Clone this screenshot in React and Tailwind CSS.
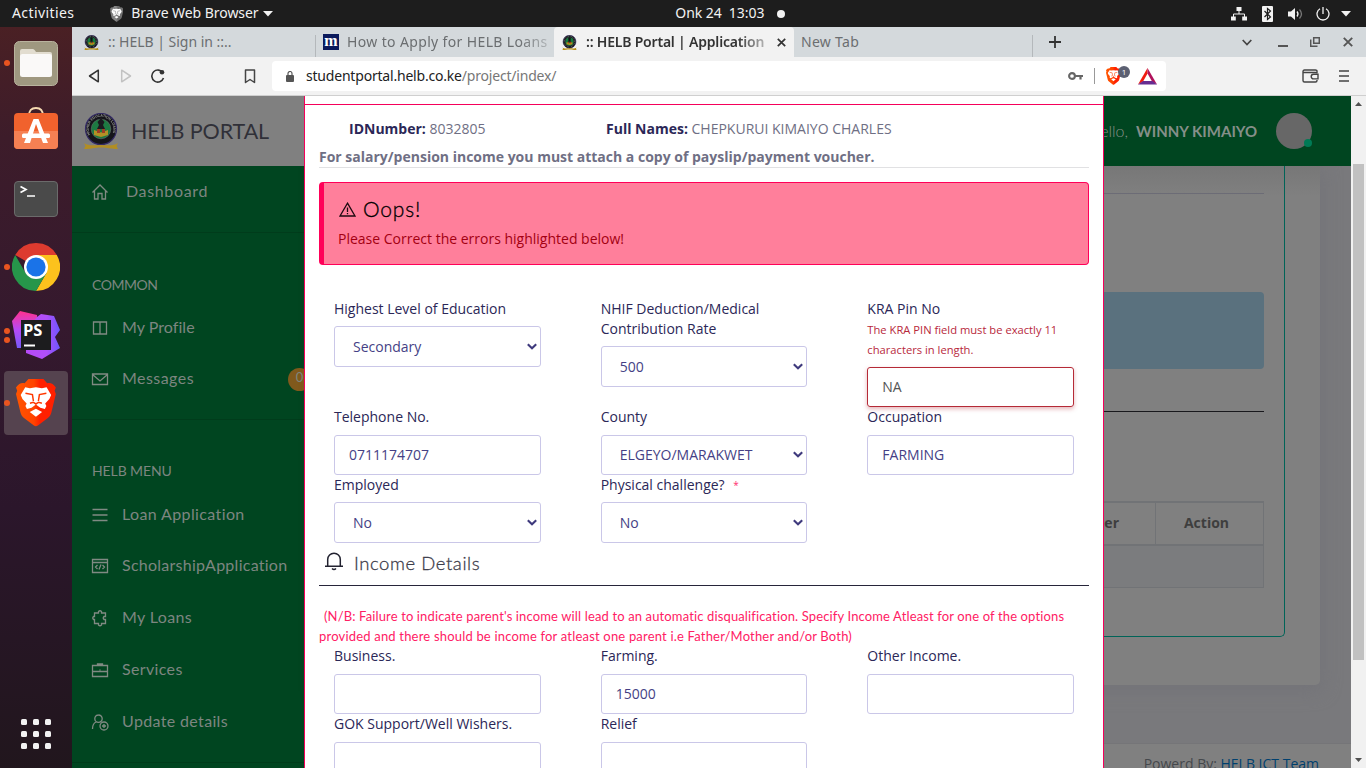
import React from "react";

const Caret = ({ className = "" }) => (
  <svg className={className} width="10" height="6" viewBox="0 0 10 6"><path d="M0 0h10L5 5.5z" fill="#f2f2f2" /></svg>
);

const LionFace = ({ line }) => (
  <g>
    <path
      fill="#fff"
      d="M4.700 16L9.300 8.300l4.700.8 6-.8 6 .8 4.700-.8L35.300 16 33.500 20l-4.200 4.500 1.200 2.500-1.500 3-4.600-1.200L20 25.600l-4.400 3.200L11 30l-1.500-3 1.200-2.500L6.500 20zM13.800 33l6.200-3.200 6.200 3.200L20 37.800z"
    />
    <path d="M9.500 14.200l7 1.300 1 6.500M30.500 14.200l-7 1.300-1 6.500M14 24.200l3.300-1 2.700 1.800 2.700-1.800 3.300 1" fill="none" stroke={line} strokeWidth="1.500" />
  </g>
);

const BraveLogo = ({ size = 48, mono = false, id }) => (
  <svg width={size * 0.83} height={size} viewBox="0 0 40 48">
    <defs>
      <linearGradient id={id} x1="0" x2="1">
        <stop offset="0" stopColor={mono ? "#777" : "#ff5500"} />
        <stop offset=".45" stopColor={mono ? "#888" : "#ff4400"} />
        <stop offset=".6" stopColor={mono ? "#666" : "#ff2000"} />
        <stop offset="1" stopColor={mono ? "#777" : "#ff2000"} />
      </linearGradient>
    </defs>
    <path fill={`url(#${id})`} d="M12.500 0h15l3.800 4.200c3.500-.8 6 .6 8.700 4.200l-1.200 3.300 1.200 3.300-4.500 18.500c-.6 2.300-1.500 4-3.500 5.500L22 46.500c-1.400 1-2.600 1-4 0L8 39c-2-1.500-2.900-3.200-3.500-5.500L0 15l1.200-3.300L0 8.400C2.700 4.800 5.200 3.400 8.700 4.200z" />
    <LionFace line={mono ? "#777" : "#ff3800"} />
  </svg>
);

const Crest = ({ w, h, large = false, id }) => (
  <svg width={w} height={h} viewBox="0 0 34 36" opacity={large ? 0.9 : 1}>
    <circle cx="17" cy="16" r="15.500" fill="#0a0a10" stroke="#2c2263" strokeWidth="1.200" />
    {large ? (
      <>
        <defs><path id={id} d="M7 23a12.200 12.200 0 1 1 20 0" /></defs>
        <text fontSize="3.600" fill="#9a9a9a" fontFamily="Liberation Sans, sans-serif" fontWeight="bold">
          <textPath href={`#${id}`} textLength="48" startOffset="1.500">HIGHER EDUCATION LOANS</textPath>
        </text>
      </>
    ) : (
      <circle cx="17" cy="16" r="12.800" fill="none" stroke="#777" strokeWidth="2.500" strokeDasharray="1.500 2" />
    )}
    <circle cx="17" cy="16" r="9.800" fill="#137a3c" stroke="#777" strokeWidth=".5" />
    <path d="M17 5l3.500 4-1.500 3 2 4h-8l2-4-1.500-3z" fill="#101015" />
    <path d="M10 17l7 2.500 7-2.500v5l-7 2-7-2z" fill="#b9921c" />
    <path d="M13 16h3v4h-3zM18 16h3v4h-3z" fill="#a3361d" />
    <path d="M0 30c5 3.500 10 2 17 2s12 1.500 17-2l-1.500 3 1.500 3c-5 .5-8-1.500-17-1.500S5 36.500 0 36l1.500-3z" fill="#b8901a" />
  </svg>
);

function TopBar() {
  return (
    <div className="flex h-[27px] shrink-0 items-center bg-[#1d1d1d] font-['Noto_Sans',sans-serif] text-[14px] text-[#f2f2f2]">
      <div className="w-[110px] pb-[2px] pl-3 tracking-[0.4px]">Activities</div>
      <BraveLogo size={16} mono id="bm" />
      <div className="ml-[8px] w-[132px] pb-[2px] whitespace-nowrap tracking-[-0.05px]">Brave Web Browser</div>
      <Caret />
      <div className="ml-[402px] flex items-center whitespace-pre">
        <span className="w-[102px] pb-[2px] tracking-[-0.05px]">Onk 24  13:03</span>
        <span className="size-2 rounded-full bg-[#f2f2f2]" />
      </div>
      <div className="ml-auto flex items-center pr-[15px]">
        <svg width="16" height="14" viewBox="0 0 16 14" fill="#f2f2f2">
          <path d="M5.500 0h5v4h-5zM0 9.500h4.800V13.500H0zM11.200 9.500H16V13.500h-4.800z" />
          <path d="M8 4v3M2.500 10V7h11v3" fill="none" stroke="#f2f2f2" />
        </svg>
        <svg className="ml-[15px]" width="11" height="16" viewBox="0 0 11 16">
          <rect width="11" height="16" rx="1" fill="#f2f2f2" />
          <path d="M2.500 5l6 6-3 2.500v-11L8.500 5l-6 6" fill="none" stroke="#1d1d1d" strokeWidth="1.200" />
        </svg>
        <svg className="ml-[15px]" width="15" height="14" viewBox="0 0 15 14" fill="#f2f2f2">
          <path d="M0 4.500h3L7 1v12L3 9.500H0z" />
          <path d="M9 4.500q2 2.500 0 5" fill="none" stroke="#f2f2f2" strokeWidth="1.300" />
          <path d="M11.500 2.500q4 4.500 0 9" fill="none" stroke="#777" strokeWidth="1.300" />
        </svg>
        <svg className="ml-[13px]" width="14" height="14" viewBox="0 0 14 14" fill="none" stroke="#f2f2f2" strokeWidth="1.300">
          <path d="M7 0v7M4 1.800a6 6 0 1 0 6 0" />
        </svg>
        <Caret className="ml-[11px]" />
      </div>
    </div>
  );
}

const DockRow = ({ dots = 0, children }) => (
  <div className="relative flex h-[68px] w-[72px] items-center justify-center">
    <div className="absolute left-1 flex flex-col gap-[3px]">
      {Array.from({ length: dots }, (_, i) => <span key={i} className="size-[6px] rounded-full bg-[#e95420]" />)}
    </div>
    {children}
  </div>
);

function Dock() {
  return (
    <div className="flex w-[72px] shrink-0 flex-col bg-[linear-gradient(#4a2024,#3d1c2a_15%,#35192e_40%,#2b162b_65%,#21161d)] pt-[2px]">
      <DockRow dots={1}>
        <svg width="44" height="45" viewBox="0 0 44 45">
          <rect x=".5" y=".5" width="43" height="44" rx="5" fill="#9f9880" stroke="#b9b39e" />
          <path d="M6 10q0-2 2-2h11q1 0 2 1.500l1 1.500h14q2 0 2 2v20H6z" fill="#e2ddd0" />
          <rect x="6" y="13" width="32" height="23" rx="2.500" fill="#faf9f8" />
        </svg>
      </DockRow>
      <DockRow>
        <svg className="mb-[6px]" width="44" height="44" viewBox="0 0 44 44">
          <path d="M15 10q0-8 7-8t7 8" fill="none" stroke="#f5d9b0" strokeWidth="1.800" />
          <rect y="7" width="44" height="36" rx="4" fill="#f1622d" />
          <path d="M0 25h44v14q0 4-4 4H4q-4 0-4-4z" fill="#f58053" />
          <path d="M19.500 13h5L34 37h-5l-7-19-6 19h-6z" fill="#fff" />
          <rect x="8" y="27.500" width="28" height="4.500" rx="1.500" fill="#fff" />
        </svg>
      </DockRow>
      <DockRow>
        <svg width="44" height="36" viewBox="0 0 44 36">
          <rect x=".5" y=".5" width="43" height="35" rx="3.500" fill="#4a4a4a" stroke="#6b6b6b" />
          <path d="M6.500 5.500l5.500 3-5.500 3M13 15h8" fill="none" stroke="#fff" strokeWidth="1.700" />
        </svg>
      </DockRow>
      <DockRow dots={1}>
        <svg width="48" height="48" viewBox="0 0 48 48">
          <path d="M24 24L3.215 12A24 24 0 0 1 44.785 12z" fill="#dd3b2f" />
          <path d="M24 24V12h20.785A24 24 0 0 1 24 48l10.400-18z" fill="#fcc21d" />
          <path d="M13.600 30L3.215 12A24 24 0 0 0 24 48l10.400-18z" fill="#26964a" />
          <circle cx="24" cy="24" r="12" fill="#fff" />
          <circle cx="24" cy="24" r="9.600" fill="#1a73e8" />
        </svg>
      </DockRow>
      <DockRow dots={2}>
        <svg width="48" height="48" viewBox="0 0 48 48">
          <defs>
            <linearGradient id="psa" x1="0" y1="0" x2="0" y2="1"><stop offset="0" stopColor="#ff318c" /><stop offset=".5" stopColor="#b74af7" /><stop offset="1" stopColor="#765af8" /></linearGradient>
            <linearGradient id="psb" x1="0" x2="1"><stop offset="0" stopColor="#b74af7" /><stop offset=".6" stopColor="#b04ff7" /><stop offset="1" stopColor="#6b57ff" /></linearGradient>
          </defs>
          <path d="M0 10L8 0l17 4 2 33H5z" fill="url(#psa)" />
          <path d="M25 6l4-3 13 2 6 14-5 7 5 11-18 11-16-6V20z" fill="url(#psb)" />
          <rect x="9" y="9" width="30" height="30" fill="#1c1c1e" />
          <path d="M12 34.500h11" stroke="#fff" strokeWidth="2" />
          <text x="11" y="25" fontSize="16.500" fontWeight="bold" fill="#fff" fontFamily="Open Sans, sans-serif">PS</text>
        </svg>
      </DockRow>
      <DockRow dots={1}>
        <div className="flex size-16 items-center justify-center rounded-[4px] bg-[#55434f]"><BraveLogo id="bd" /></div>
      </DockRow>
      <div className="mt-auto mb-[19px] grid grid-cols-3 gap-[6px] self-center">
        {Array.from({ length: 9 }, (_, i) => <span key={i} className="size-[6px] rounded-[1.5px] bg-[#f2f2f2]" />)}
      </div>
    </div>
  );
}

function Tabs() {
  return (
    <div className="flex h-[30px] shrink-0 items-center bg-[#d4d9dc] font-['Noto_Sans',sans-serif] text-[14px] whitespace-nowrap text-[#6b6e70]">
      <div className="flex w-[244px] items-center pl-[12px]">
        <Crest w={15} h={15} />
        <span className="ml-[9px] grow pb-[2px] tracking-[-0.02px]">:: HELB | Sign in ::..</span>
        <span className="h-[22px] w-px translate-y-1 bg-[#b4b8bb]" />
      </div>
      <div className="flex w-[238px] items-center pl-[7px]">
        <span className="flex size-4 items-center justify-center bg-[#0b1a5c] pb-[3px] font-['Liberation_Serif',serif] text-[16px] leading-4 font-bold text-white">m</span>
        <span className="ml-[8px] w-[202px] overflow-hidden pb-[2px] tracking-[0.36px] [mask-image:linear-gradient(90deg,#000_85%,rgba(0,0,0,0.3))]">How to Apply for HELB Loans</span>
      </div>
      <div className="flex h-full w-[240px] items-center rounded-t-[4px] bg-[#f2f2f2] pl-[8px] text-[#333]">
        <Crest w={15} h={15} />
        <span className="ml-[9px] w-[184px] overflow-hidden pb-[2px] font-semibold tracking-[-0.2px] [mask-image:linear-gradient(90deg,#000_82%,rgba(0,0,0,0.2))]">:: HELB Portal | Application</span>
        <svg className="ml-[7px]" width="9" height="9" viewBox="0 0 9 9"><path d="M.8.8l7.400 7.400M8.200.8L.8 8.200" stroke="#333" strokeWidth="1.700" /></svg>
      </div>
      <div className="flex w-[239px] items-center pl-[7px]">
        <span className="grow pb-[2px] tracking-[0.3px]">New Tab</span>
        <span className="h-[22px] w-px translate-y-1 bg-[#b4b8bb]" />
      </div>
      <svg className="ml-[16px]" width="12" height="12" viewBox="0 0 12 12"><path d="M6 0v12M0 6h12" stroke="#333" strokeWidth="1.800" /></svg>
      <div className="ml-auto flex items-center pr-[13px]">
        <svg width="10" height="7" viewBox="0 0 10 7"><path d="M.7 1L5 5.500 9.300 1" fill="none" stroke="#444" strokeWidth="1.700" /></svg>
        <svg className="mt-[2px] ml-[26px]" width="10" height="10" viewBox="0 0 10 10"><path d="M0 8h10" stroke="#555" strokeWidth="2" /></svg>
        <svg className="ml-[22px]" width="10" height="10" viewBox="0 0 10 10"><path d="M3.700.7h5.600v5.600H3.700zM.7 2.500v6.800h6.800" fill="none" stroke="#555" strokeWidth="1.500" /></svg>
        <svg className="ml-[23px]" width="10" height="10" viewBox="0 0 10 10"><path d="M.8.8l8.400 8.400M9.200.8L.8 9.200" stroke="#555" strokeWidth="1.900" /></svg>
      </div>
    </div>
  );
}

function Toolbar() {
  return (
    <div className="flex h-[39px] shrink-0 items-center border-b border-[#cfcfcf] bg-[#f2f2f2] pl-[16px] font-['Noto_Sans',sans-serif] text-[14px]">
      <svg width="12" height="14" viewBox="0 0 12 14"><path d="M10.300 1.200v11.600L1.500 7z" fill="none" stroke="#333" strokeWidth="1.500" strokeLinejoin="round" /></svg>
      <svg className="ml-[20px]" width="12" height="14" viewBox="0 0 12 14"><path d="M1.700 1.200v11.600L10.500 7z" fill="none" stroke="#c2c2c2" strokeWidth="1.500" strokeLinejoin="round" /></svg>
      <svg className="ml-[18px]" width="15" height="14" viewBox="0 0 15 14"><path d="M13.500 9a6 6 0 1 1-.5-5" fill="none" stroke="#333" strokeWidth="1.600" /><circle cx="12" cy="3.200" r="2.300" fill="#333" /></svg>
      <svg className="ml-[79px]" width="12" height="15" viewBox="0 0 12 15"><path d="M1.500 1h9v12.500L6 10.500l-4.500 3z" fill="none" stroke="#444" strokeWidth="1.500" strokeLinejoin="round" /></svg>
      <div className="ml-[16px] flex h-[30px] w-[894px] items-center rounded-[4px] bg-white pl-[14px]">
        <svg width="8" height="11" viewBox="0 0 8 11"><rect y="4" width="8" height="7" rx="1" fill="#555" /><path d="M2 4V2.500a2 2 0 0 1 4 0V4" fill="none" stroke="#555" strokeWidth="1.200" /></svg>
        <span className="ml-[12px] pb-[2px] tracking-[-0.2px] text-[#222]">studentportal.helb.co.ke<span className="text-[#777]">/project/index/</span></span>
        <svg className="ml-auto" width="15" height="8" viewBox="0 0 15 8"><circle cx="4" cy="4" r="2.900" fill="none" stroke="#666" strokeWidth="2.100" /><path d="M7 4h8M12.500 4v3.500" stroke="#666" strokeWidth="2.200" /></svg>
        <span className="ml-[11px] h-4 w-px bg-[#999]" />
        <span className="relative ml-[11px] flex w-[25px]">
          <BraveLogo size={18} id="bt" />
          <span className="absolute -top-[1px] left-[12px] flex h-[12px] w-[12px] items-center justify-center rounded-full bg-[#5c6072] font-['Open_Sans',sans-serif] text-[8px] text-white">1</span>
        </span>
        <svg className="mr-[9px] ml-[7px]" width="19" height="17" viewBox="0 0 19 17">
          <path d="M9.500 0L0 16.500l5-3 4.500-8z" fill="#f01c10" />
          <path d="M9.500 0L19 16.500l-5-3-4.500-8z" fill="#b0125c" />
          <path d="M0 16.500h19l-4.500-3.500H5z" fill="#662d91" />
        </svg>
      </div>
      <svg className="ml-auto" width="17" height="14" viewBox="0 0 17 14" fill="none" stroke="#444" strokeWidth="1.400">
        <path d="M15 4V2.200Q15 1 13.500 1h-11Q1 1 1 2.500v9Q1 13 2.500 13h11q1.500 0 1.500-1.500V11M1 3.500h12.500q1.500 0 1.500 1" />
        <path d="M16 5.300h-4.500a2.300 2.300 0 0 0 0 4.600H16z" />
      </svg>
      <svg className="mr-[17px] ml-[20px]" width="10" height="12" viewBox="0 0 10 12"><path d="M0 1h10M0 6h10M0 11h10" stroke="#444" strokeWidth="1.600" /></svg>
    </div>
  );
}

const icons = {
  home: <path d="M.5 8.500L8 1l7.500 7.500M2.500 7v8h3.500V9.500h4V15h3.500V7" />,
  book: <path d="M1.500 2h13v12h-13zM8 2v12" />,
  mail: <path d="M.5 3h15v10.500H.5zM.5 3.500L8 10l7.500-6.500" />,
  lines: <path d="M.5 2.500h15M.5 8h15M.5 13.500h15" />,
  code: <path d="M.5 1.500h15v13H.5zM.5 4.500h15M5.500 7L3.500 9l2 2M10.500 7l2 2-2 2M9 6.500l-2 5" />,
  gear: <path d="M6.500 1.500q1.500-1.500 3 0v1.500h4v3.500h-1.500q-1.500 1.500 0 3h1.500V13.500h-4V15q-1.500 1.500-3 0v-1.500h-4v-4H1.500Q0 8 1.500 6.500h1V3h4z" />,
  bag: <path d="M.5 3.500h15v11H.5zM.5 9.500h15M5.500 3.500V2h5v1.500M8 7.500v1" />,
  user: <path d="M4.200 8C1.500 9 .5 11.500.5 15M6.500 1a3.700 3.700 0 1 1 0 7.400 3.700 3.700 0 1 1 0-7.400M12 8a4 4 0 1 1 0 8 4 4 0 1 1 0-8M12 10v4M10 12h4" />,
};

const NavItem = ({ icon, label, className }) => (
  <div className={`flex items-center pl-5 ${className}`}>
    <svg className="overflow-visible" width="16" height="16" viewBox="0 0 16 16" fill="none" stroke="#808a83" strokeWidth="1.300">{icons[icon]}</svg>
    {label}
  </div>
);

const navText = "ml-[14px] whitespace-nowrap pb-[2px]";

function Sidebar() {
  return (
    <div className="flex w-[250px] shrink-0 flex-col bg-[#004520] font-['Lato',sans-serif] text-[16px] text-[#7d8680]">
      <NavItem icon="home" className="h-[52px]" label={<span className="ml-[18px] pb-[2px] tracking-[0.65px]">Dashboard</span>} />
      <div className="mt-[14px] h-px bg-[#003c1b]" />
      <div className="mt-[41px] h-[22px] pl-5 text-[14px] leading-[22px] tracking-[-0.45px]">COMMON</div>
      <NavItem icon="book" className="mt-[6px] h-[52px]" label={<span className={`${navText} tracking-[0.05px]`}>My Profile</span>} />
      <div className="flex h-[50px] items-center">
        <NavItem icon="mail" className="" label={<span className={`${navText} tracking-[0.45px]`}>Messages</span>} />
        <span className="ml-[94px] flex size-[23px] shrink-0 items-center justify-center rounded-full bg-[#80591c] pb-[2px] text-[13px]">0</span>
      </div>
      <div className="mt-[15px] h-px bg-[#003c1b]" />
      <div className="mt-[40px] h-[22px] pl-5 text-[14px] leading-[22px] tracking-[-0.1px]">HELB MENU</div>
      <NavItem icon="lines" className="mt-[7px] h-[51px]" label={<span className={`${navText} tracking-[0.38px]`}>Loan Application</span>} />
      <NavItem icon="code" className="h-[52px]" label={<span className={`${navText} tracking-[0.26px]`}>ScholarshipApplication</span>} />
      <NavItem icon="gear" className="h-[52px]" label={<span className={`${navText} tracking-[0.38px]`}>My Loans</span>} />
      <NavItem icon="bag" className="h-[52px]" label={<span className={`${navText} tracking-[0.35px]`}>Services</span>} />
      <NavItem icon="user" className="h-[52px]" label={<span className={`${navText} tracking-[0.35px]`}>Update details</span>} />
      <div className="mt-[14px] h-px bg-[#003c1b]" />
    </div>
  );
}

function Portal() {
  return (
    <div className="flex min-w-0 grow flex-col overflow-hidden font-['Open_Sans',sans-serif] text-[14px]">
      <div className="relative z-10 flex h-[70px] shrink-0 bg-[#004520]">
        <div className="flex w-[250px] items-center bg-[#808080] pl-[12px]">
          <Crest w={34} h={36} large id="crest-ring" />
          <span className="ml-[13px] font-['Lato',sans-serif] text-[21.5px] tracking-[-0.1px] text-[#303038]">HELB PORTAL</span>
        </div>
        <div className="ml-auto flex items-center pr-[39px] font-['Lato',sans-serif] text-[16px] text-[#858f89]">
          <span className="font-light">Hello,</span>
          <span className="ml-[8px] w-[122px] text-[15px] font-bold whitespace-nowrap">WINNY KIMAIYO</span>
          <span className="relative ml-[18px] size-9 rounded-full bg-[#676767]">
            <span className="absolute right-0 bottom-[2px] size-2 rounded-full bg-[#007a55]" />
          </span>
        </div>
      </div>
      <div className="flex min-h-0 grow">
        <Sidebar />
        <div className="flex grow flex-col bg-[#79797c]">
          <div className="mr-[31px] flex h-[519px] flex-col items-end rounded-br-[5px] bg-[linear-gradient(#777_0,#808080_30px)] pr-[35px] shadow-[0_4px_18px_2px_#747479]">
            <div className="flex h-[471px] w-full flex-col rounded-br-[5px] border-r border-b border-[#006458] pr-[20px]">
              <div className="mt-[27px] h-px bg-[#6c6c76]" />
              <div className="mt-[98px] h-[77px] rounded-[4px] bg-[#5a717e]" />
              <div className="mt-[42px] h-px bg-[#18181c]" />
              <div className="mt-[89px] flex h-[45px] border-y-2 border-r border-[#717376] font-bold text-[#3e3e3e]">
                <div className="flex grow items-center justify-end pr-[36px] pb-[2px]">Voucher</div>
                <div className="flex w-[108px] items-center justify-center border-l border-[#717376] pr-[6px] pb-[2px]">Action</div>
              </div>
              <div className="h-[42px] border-r border-b border-[#717376] bg-[#7b7c7e]" />
            </div>
          </div>
          <div className="mt-auto flex h-[25px] justify-end overflow-hidden border-t border-[#757578] bg-[#808080] pt-[9px] pr-[32px] whitespace-pre text-[#45484c]">
            Powerd By: <span className="text-[#00406e]">HELB ICT Team</span>
          </div>
        </div>
      </div>
    </div>
  );
}

const Chevron = () => (
  <svg width="10" height="7" viewBox="0 0 10 7"><path d="M.8 1.200L5 5.200l4.200-4" fill="none" stroke="#3f3a7d" strokeWidth="2.100" /></svg>
);

const Label = ({ children }) => <div className="leading-5 whitespace-nowrap text-[#2b2757]">{children}</div>;

const Select = ({ children, className = "" }) => (
  <div className={`flex h-[41px] items-center justify-between rounded-[3px] border border-[#cac7e8] pr-[3px] pl-[18px] text-[#453f85] ${className}`}>
    {children}<Chevron />
  </div>
);

const Input = ({ children, className = "mt-2 border-[#cac7e8] text-[#453f85]" }) => (
  <div className={`flex h-10 items-center rounded-[3px] border pb-[2px] pl-[14px] ${className}`}>{children}</div>
);

const Row = ({ children, className }) => (
  <div className={`-mx-[15px] grid grid-cols-3 gap-x-[60px] px-[30px] ${className}`}>{children}</div>
);

function Modal() {
  return (
    <div className="absolute top-0 left-[232px] z-20 flex h-full w-[800px] flex-col overflow-hidden border-x border-[#f5005a] bg-white px-[14px] font-['Open_Sans',sans-serif] text-[14px]">
      <div className="-mx-[14px] h-[9px] shrink-0 border-b border-[#f5005a]" />
      <div className="mt-[13px] flex h-5 shrink-0 items-center pl-[30px] whitespace-pre text-[#6f6f84]">
        <div className="w-[257px]"><b className="text-[#2b2757]">IDNumber:</b> 8032805</div>
        <div><b className="text-[#2b2757]">Full Names:</b> CHEPKURUI KIMAIYO CHARLES</div>
      </div>
      <div className="mt-[9px] h-[21px] shrink-0 border-b border-[#e1e1e3] leading-5 font-bold text-[#6f6f84]">For salary/pension income you must attach a copy of payslip/payment voucher.</div>
      <div className="mt-[14px] flex h-[83px] shrink-0 flex-col rounded-[4px] border border-l-[5px] border-[#ff0058] bg-[#ff7f9b] pt-[12px] pl-[14px]">
        <div className="flex h-7 items-center font-['Lato',sans-serif] text-[21px] text-black">
          <svg className="ml-[1px]" width="17" height="15" viewBox="0 0 17 15" fill="none" stroke="#1c0a10" strokeWidth="1.300"><path d="M8.500 1.200L16 14H1zM8.500 5.500v4.500M8.500 11v1.300" /></svg>
          <span className="ml-[7px] font-light tracking-[0.8px] [-webkit-text-stroke:0.3px]">Oops!</span>
        </div>
        <div className="mt-[6px] leading-5 text-[#a30012]">Please Correct the errors highlighted below!</div>
      </div>

      <Row className="mt-[34px] h-[108px] shrink-0">
        <div><Label>Highest Level of Education</Label><Select className="mt-[7px]">Secondary</Select></div>
        <div><Label>NHIF Deduction/Medical<br />Contribution Rate</Label><Select className="mt-[7px]">500</Select></div>
        <div>
          <Label>KRA Pin No</Label>
          <div className="pt-px text-[11.2px] leading-5 whitespace-nowrap text-[#b8283c]">The KRA PIN field must be exactly 11<br />characters in length.</div>
          <Input className="mt-[7px] border-[#b52a37] text-[#555] shadow-[0_2px_4px_rgba(181,42,55,0.35)]">NA</Input>
        </div>
      </Row>
      <Row className="h-[68px] shrink-0">
        <div><Label>Telephone No.</Label><Input>0711174707</Input></div>
        <div><Label>County</Label><Select className="mt-2 h-[40px]! pb-px">ELGEYO/MARAKWET</Select></div>
        <div><Label>Occupation</Label><Input>FARMING</Input></div>
      </Row>
      <Row className="h-[68px] shrink-0">
        <div><Label>Employed</Label><Select className="mt-[7px]">No</Select></div>
        <div><Label>Physical challenge? <span className="ml-[5px] align-[1px] text-[10px] text-[#ff2d6f]">*</span></Label><Select className="mt-[7px]">No</Select></div>
      </Row>
      <div className="flex h-[43px] shrink-0 items-center border-b border-[#27253a] font-['Lato',sans-serif] text-[18.5px] text-[#3c3c4a] pl-[6px]">
        <svg className="mb-[6px]" width="18" height="19" viewBox="0 0 18 19" fill="none" stroke="#222230" strokeWidth="1.500">
          <path d="M0 14.300h18M2.700 14V7.500a6.300 6.300 0 0 1 12.600 0V14M7 16.500q2 2 4 0" />
        </svg>
        <span className="ml-[11px] font-light tracking-[0.57px] [-webkit-text-stroke:0.3px]">Income Details</span>
      </div>
      <div className="mt-[20px] h-[40px] shrink-0 font-['Lato',sans-serif] text-[13px] leading-5 whitespace-nowrap text-[#ff2064]">
        <div className="pl-[5px] tracking-[0.135px]">(N/B: Failure to indicate parent's income will lead to an automatic disqualification. Specify Income Atleast for one of the options</div>
        <div className="tracking-[0.19px]">provided and there should be income for atleast one parent i.e Father/Mother and/or Both)</div>
      </div>
      <Row className="h-[68px] shrink-0">
        <div><Label>Business.</Label><Input /></div>
        <div><Label>Farming.</Label><Input>15000</Input></div>
        <div><Label>Other Income.</Label><Input /></div>
      </Row>
      <Row className="h-[68px] shrink-0">
        <div><Label>GOK Support/Well Wishers.</Label><Input /></div>
        <div><Label>Relief</Label><Input /></div>
      </Row>
    </div>
  );
}

function Scrollbar() {
  return (
    <div className="flex w-[15px] shrink-0 flex-col items-center bg-[#f1f1f1]">
      <svg className="mt-[6px]" width="7" height="4" viewBox="0 0 7 4"><path d="M3.500 0L7 4H0z" fill="#505050" /></svg>
      <div className="mt-[58px] h-[496px] w-[11px] bg-[#c1c1c1]" />
      <svg className="mt-auto mb-[6px]" width="7" height="4" viewBox="0 0 7 4"><path d="M3.500 4L7 0H0z" fill="#505050" /></svg>
    </div>
  );
}

export default function App() {
  return (
    <div className="flex h-[768px] w-[1366px] flex-col overflow-hidden">
      <TopBar />
      <div className="flex min-h-0 grow">
        <Dock />
        <div className="flex min-w-0 grow flex-col">
          <Tabs />
          <Toolbar />
          <div className="relative flex min-h-0 grow">
            <Portal />
            <Scrollbar />
            <Modal />
          </div>
        </div>
      </div>
    </div>
  );
}
